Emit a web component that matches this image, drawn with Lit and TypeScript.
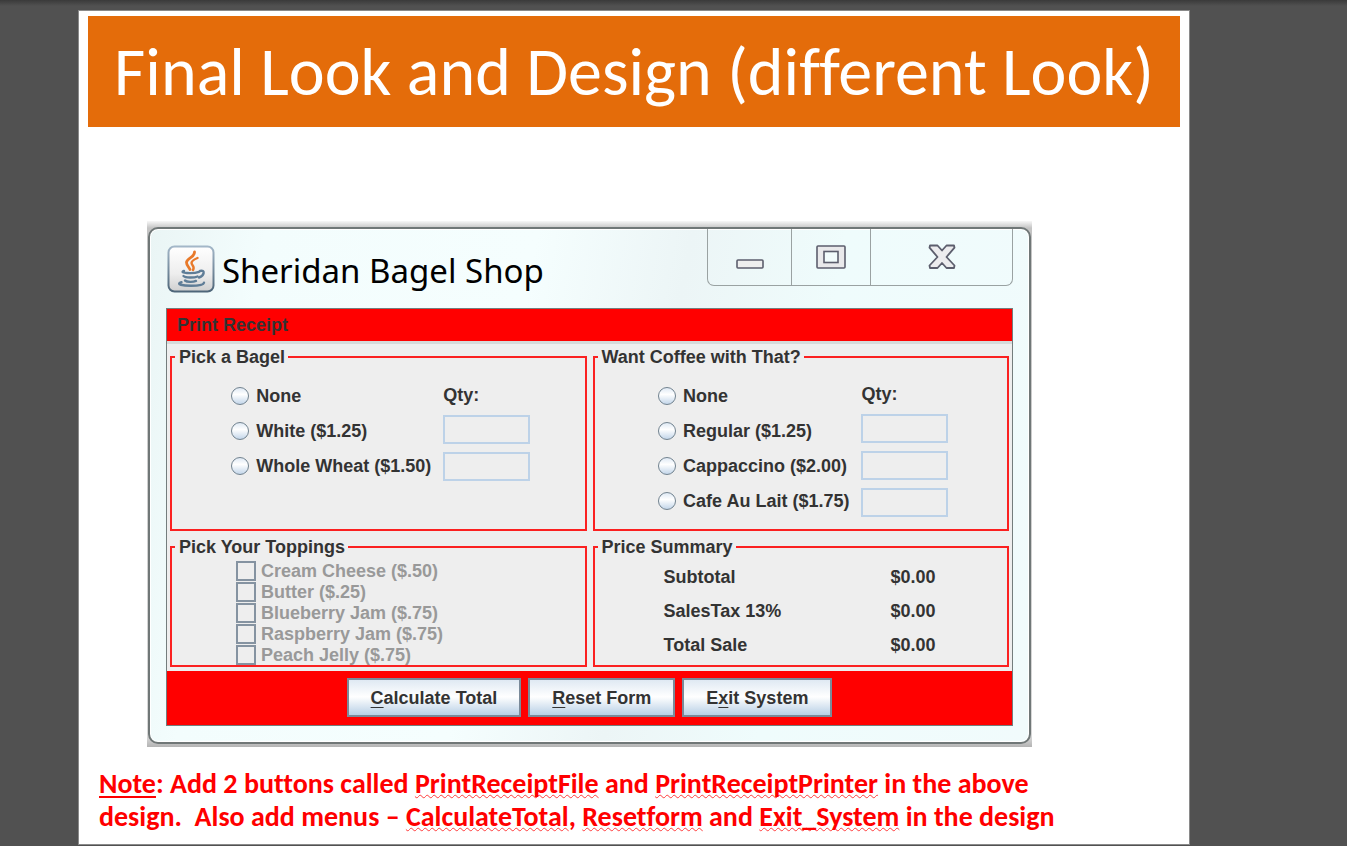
import { LitElement, html, css } from "lit";
import { customElement, property } from "lit/decorators.js";

interface Choice {
  id: string;
  label: string;
}

@customElement("order-options")
class OrderOptions extends LitElement {
  @property() heading = "";
  @property() group = "";
  @property({ attribute: false }) choices: Choice[] = [];

  static styles = css`
    :host { display: grid; }
    .panel { margin: 0; padding: 0; border: 2px solid #fb2020; min-width: 0; }
    .legend { margin-left: 3px; padding: 0 3px 0 4px; line-height: 20px; }
    .body { display: flex; justify-content: center; align-items: center; gap: 12px; padding: 11px 0 8px 5px; }
    .options { display: grid; grid-auto-rows: 35px; align-items: center; padding-bottom: 3px; }
    .option { display: flex; align-items: center; gap: 7px; }
    .radio {
      appearance: none; margin: 0; width: 18px; height: 18px; border-radius: 50%;
      border: 1px solid #71828f; background: linear-gradient(#dfe9f4, #fff 40%, #c3d6ea);
    }
    .quantities { display: grid; gap: 8px; }
    .qty { line-height: 23px; }
    .field {
      box-sizing: border-box; width: 87px; height: 29px; margin: 0; padding: 0 4px;
      border: 2px solid #bdd2e8; border-radius: 0; background: #eee; font: inherit; color: inherit;
    }
  `;

  render() {
    return html`
      <fieldset class="panel">
        <legend class="legend">${this.heading}</legend>
        <div class="body">
          <div class="options">
            ${this.choices.map(
              (c) => html`<label class="option"
                ><input class="radio" type="radio" name=${this.group} id=${c.id} />${c.label}</label
              >`
            )}
          </div>
          <div class="quantities">
            <div class="qty">Qty:</div>
            ${this.choices
              .slice(1)
              .map((c) => html`<input class="field" type="text" aria-label="Quantity, ${c.label}" />`)}
          </div>
        </div>
      </fieldset>
    `;
  }
}

@customElement("shop-window")
class ShopWindow extends LitElement {
  static styles = css`
    :host { display: block; color: #333; font: bold 18px/20px "Liberation Sans", Arial, sans-serif; }
    .shade { padding: 6px 1px 3px; background: linear-gradient(#f8f8f8, #c4c4c4 7px, #d8d8d8 98%, #b4b4b4); }
    .frame {
      border: 2px solid #707777; border-radius: 10px; padding: 0 16px 16px;
      box-shadow: inset 0 0 0 1px #fff;
      background: linear-gradient(100deg, #eaf5f5, #f3fdfd 12%, #f5fefe 40%, #ecf5f6 56%, #effcfc 72%, #f1fbfc);
    }
    .titlebar { display: flex; align-items: flex-start; height: 79px; }
    .java { width: 48px; height: 48px; margin: 16px 0 0 1px; flex: none; }
    .name { flex: 1; margin: 16px 0 0 7px; font: 33px/52px "Noto Sans", "Open Sans", sans-serif; color: #000; white-space: nowrap; }
    .controls { display: flex; border: 1px solid #9aa2a2; border-top: 0; border-radius: 0 0 7px 7px; }
    .control { box-sizing: border-box; height: 56px; padding: 0; border: 0; border-right: 1px solid #9aa2a2; background: none; }
    .control:last-child { border-right: 0; }
    .glyph { display: block; margin: 0 auto; }
    .min { width: 84px; }
    .max { width: 79px; }
    .close { width: 141px; }
    .client { border: 1px solid #747d7d; background: #eee; }
    .menubar { background: #f00; border-bottom: 3px solid #d5dada; }
    .menu { display: block; padding: 0 10px; border: 0; background: none; font: inherit; line-height: 32px; color: #333; }
    .grid { display: grid; grid-template-columns: 1fr 1fr; gap: 6px; padding: 3px 3px 4px; }
    .panel { margin: 0; padding: 0; border: 2px solid #fb2020; min-width: 0; }
    .legend { margin-left: 3px; padding: 0 3px 0 4px; line-height: 20px; }
    .toppings { display: grid; grid-auto-rows: 21px; padding: 3px 0 0 64px; align-items: center; }
    .topping { display: flex; align-items: center; gap: 5px; color: #999; }
    .tick { appearance: none; box-sizing: border-box; width: 20px; height: 20px; margin: 0; border: 2px solid #8593a1; background: #eee; }
    .summary { margin: 3px 0 0 69px; border-collapse: collapse; }
    .what, .amount { padding: 7px 0; text-align: left; }
    .what { width: 227px; }
    .actions { display: flex; justify-content: center; gap: 7px; padding: 7px 0 8px; background: #f00; }
    .action {
      height: 39px; padding: 0 22px; border: 2px solid #7a8a99; border-radius: 0;
      background: linear-gradient(#dfe9f3, #fff 48%, #b8cfe5); font: inherit; color: #333; white-space: nowrap;
    }
    .key { text-decoration: underline; text-underline-offset: 3px; text-decoration-thickness: 1px; }
  `;

  private bagels: Choice[] = [
    { id: "bagel-none", label: "None" },
    { id: "bagel-white", label: "White ($1.25)" },
    { id: "bagel-wheat", label: "Whole Wheat ($1.50)" },
  ];
  private coffees: Choice[] = [
    { id: "coffee-none", label: "None" },
    { id: "coffee-regular", label: "Regular ($1.25)" },
    { id: "coffee-cappuccino", label: "Cappaccino ($2.00)" },
    { id: "coffee-lait", label: "Cafe Au Lait ($1.75)" },
  ];
  private toppings = [
    "Cream Cheese ($.50)",
    "Butter ($.25)",
    "Blueberry Jam ($.75)",
    "Raspberry Jam ($.75)",
    "Peach Jelly ($.75)",
  ];
  private totals = ["Subtotal", "SalesTax 13%", "Total Sale"];

  render() {
    return html`
      <div class="shade">
        <div class="frame">
          <header class="titlebar">
            <svg class="java" viewBox="0 0 48 48" fill="none" aria-hidden="true">
              <defs>
                <linearGradient id="tile" x1="0" y1="0" x2="0" y2="1">
                  <stop offset="0" stop-color="#fff" />
                  <stop offset=".6" stop-color="#eee" />
                  <stop offset="1" stop-color="#cfcfcf" />
                </linearGradient>
                <linearGradient id="rim" x1="0" y1="0" x2="0" y2="1">
                  <stop offset="0" stop-color="#a3b7c8" />
                  <stop offset="1" stop-color="#4e6679" />
                </linearGradient>
                <linearGradient id="metal" x1="0" y1="0" x2="0" y2="1">
                  <stop offset="0" stop-color="#fff" />
                  <stop offset="1" stop-color="#d6d6d8" />
                </linearGradient>
              </defs>
              <rect x="1.5" y="1.5" width="45" height="45" rx="6" fill="url(#tile)" stroke="url(#rim)" stroke-width="2" />
              <g stroke="#e8792a" stroke-linecap="round">
                <path d="M27.500 7c.5 5.500-8 6-8 10.500 0 2.800 2.300 4.200 3.500 7" stroke-width="2.800" />
                <path d="M30.500 13c-3 1.200-6 2.600-6 5 0 2.200 3.800 3.400 1.500 7" stroke-width="2.400" />
              </g>
              <g stroke="#5f7d97" stroke-width="2.400" stroke-linecap="round">
                <path d="M17 26c-6 2 9 3.200 15 .8M16.500 31c2 2 10.500 2 14 .5M18 35.500c2 1.800 8 1.800 11 .4" />
                <path d="M33 26c5.500-1.500 4.500 4.500-1 6.500" />
                <path d="M14.500 37.200c-6.500 2 1.500 3.600 9.500 3.600 6.500 0 12.500-.8 13-3.100" />
              </g>
            </svg>
            <h2 class="name">Sheridan Bagel Shop</h2>
            <div class="controls">
              <button class="control min" aria-label="Minimize">
                <svg class="glyph" width="28" height="28" viewBox="0 0 28 28">
                  <rect x="1" y="17" width="26" height="8" rx="1" fill="#eee" stroke="#5c5e6d" stroke-width="1.600" />
                </svg>
              </button>
              <button class="control max" aria-label="Maximize">
                <svg class="glyph" width="30" height="28" viewBox="0 0 30 28" stroke="#5c5e6d" stroke-width="1.600">
                  <rect x="1" y="3" width="28" height="22" rx="1" fill="#e9e9eb" />
                  <rect x="8" y="8.500" width="14" height="11" fill="#f2fcfc" />
                </svg>
              </button>
              <button class="control close" aria-label="Close">
                <svg class="glyph" width="28" height="28" viewBox="0 0 28 28">
                  <path
                    d="M2 2.500h7.500l4.500 5 4.500-5H26l.5 2.200L18.500 14l8 8.500-.5 2.500h-7.500l-4.500-5-4.500 5H2l-.5-2.500 8-8.500-8-9.300z"
                    fill="#ececee" stroke="#5c5e6d" stroke-width="1.800" stroke-linejoin="round"
                  />
                </svg>
              </button>
            </div>
          </header>
          <div class="client">
            <nav class="menubar"><button class="menu">Print Receipt</button></nav>
            <div class="grid">
              <order-options heading="Pick a Bagel" group="bagel" .choices=${this.bagels}></order-options>
              <order-options heading="Want Coffee with That?" group="coffee" .choices=${this.coffees}></order-options>
              <fieldset class="panel">
                <legend class="legend">Pick Your Toppings</legend>
                <div class="toppings">
                  ${this.toppings.map(
                    (t) => html`<label class="topping"><input class="tick" type="checkbox" disabled />${t}</label>`
                  )}
                </div>
              </fieldset>
              <fieldset class="panel">
                <legend class="legend">Price Summary</legend>
                <table class="summary">
                  ${this.totals.map(
                    (t) => html`<tr><th class="what" scope="row">${t}</th><td class="amount">$0.00</td></tr>`
                  )}
                </table>
              </fieldset>
            </div>
            <div class="actions">
              <button class="action"><span class="key">C</span>alculate Total</button>
              <button class="action"><span class="key">R</span>eset Form</button>
              <button class="action">E<span class="key">x</span>it System</button>
            </div>
          </div>
        </div>
      </div>
    `;
  }
}

@customElement("app-root")
class AppRoot extends LitElement {
  static styles = css`
    :host {
      display: block; box-sizing: border-box; min-height: 100vh; padding: 10px 157px 1px 78px;
      background: linear-gradient(#3a3a3a, #515151 6px);
      font-family: Carlito, Lato, sans-serif;
    }
    .slide { box-sizing: border-box; min-height: calc(100vh - 11px); padding: 5px 9px 8px; border: 1px solid #8a8a8a; background: #fff; }
    .title { margin: 0; background: #e46c0a; color: #fff; text-align: center; font-size: 68px; line-height: 111px; font-weight: 400; font-variant-ligatures: none; }
    .shot { margin: 94px 148px 0 59px; }
    .note { margin: 20px 0 0 11px; color: #f00; font-size: 28px; line-height: 33px; font-weight: 700; font-variant-ligatures: none; }
    .lead { text-decoration: underline; text-decoration-thickness: 2px; text-underline-offset: 3px; }
    .typo { text-decoration: underline wavy #ff3c3c 1px; text-underline-offset: 1px; text-decoration-skip-ink: none; }
  `;

  render() {
    return html`
      <main class="slide">
        <h1 class="title">Final Look and Design (different Look)</h1>
        <shop-window class="shot"></shop-window>
        <p class="note">
          <span class="lead">Note</span>: Add 2 buttons called <span class="typo">PrintReceiptFile</span> and
          <span class="typo">PrintReceiptPrinter</span> in the above<br />design.&nbsp; Also add menus –
          <span class="typo">CalculateTotal</span>, <span class="typo">Resetform</span> and
          <span class="typo">Exit_System</span> in the design
        </p>
      </main>
    `;
  }
}
